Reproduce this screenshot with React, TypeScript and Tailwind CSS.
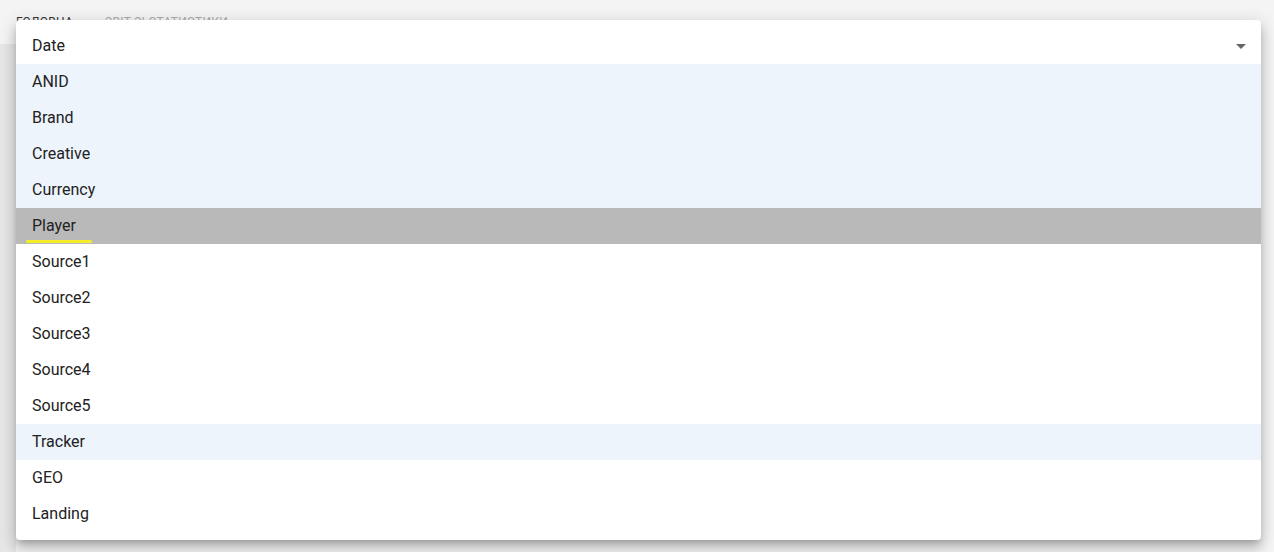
import React from "react";

const items = [
  { label: "ANID", selected: true },
  { label: "Brand", selected: true },
  { label: "Creative", selected: true },
  { label: "Currency", selected: true },
  { label: "Player", selected: false, focused: true },
  { label: "Source1", selected: false },
  { label: "Source2", selected: false },
  { label: "Source3", selected: false },
  { label: "Source4", selected: false },
  { label: "Source5", selected: false },
  { label: "Tracker", selected: true },
  { label: "GEO", selected: false },
  { label: "Landing", selected: false },
];

const App = () => {
  return (
    <div
      className="relative w-full h-[552px] overflow-hidden bg-[#f4f4f4]"
      style={{ fontFamily: "Roboto, 'Noto Sans', sans-serif" }}
    >
      <div className="flex items-center gap-[14px] px-4 pt-[13px] text-[12px] uppercase tracking-wide">
        <span className="text-[#333]">Головна</span>
        <span className="text-[#555]">›</span>
        <span className="text-[#aaa]">Звіт зі статистики</span>
      </div>
      <div className="absolute left-0 top-[44px] bottom-0 w-4 bg-[#e6e6e6]" />

      <div className="absolute left-4 top-5 w-[1245px] rounded bg-white py-2 shadow-[0_5px_6px_-3px_rgba(0,0,0,0.2),0_9px_12px_1px_rgba(0,0,0,0.14),0_3px_16px_2px_rgba(0,0,0,0.12)]">
        <ul className="text-base text-[#222]">
          <li className="flex h-9 items-center justify-between px-4">
            <span>Date</span>
            <svg width="10" height="5" viewBox="0 0 10 5" className="-mr-px">
              <path d="M0 0h10L5 5z" fill="#666" />
            </svg>
          </li>
          {items.map((item) => (
            <li
              key={item.label}
              className={
                item.focused
                  ? "relative flex h-9 items-center px-4 bg-[#b9b9b9]"
                  : item.selected
                  ? "flex h-9 items-center px-4 bg-[#edf4fc]"
                  : "flex h-9 items-center px-4"
              }
            >
              <span>{item.label}</span>
              {item.focused && (
                <span className="absolute left-[10px] bottom-[1px] h-[3px] w-[66px] rounded-full bg-[#f5ec2a]" />
              )}
            </li>
          ))}
        </ul>
      </div>
    </div>
  );
};

export default App;
